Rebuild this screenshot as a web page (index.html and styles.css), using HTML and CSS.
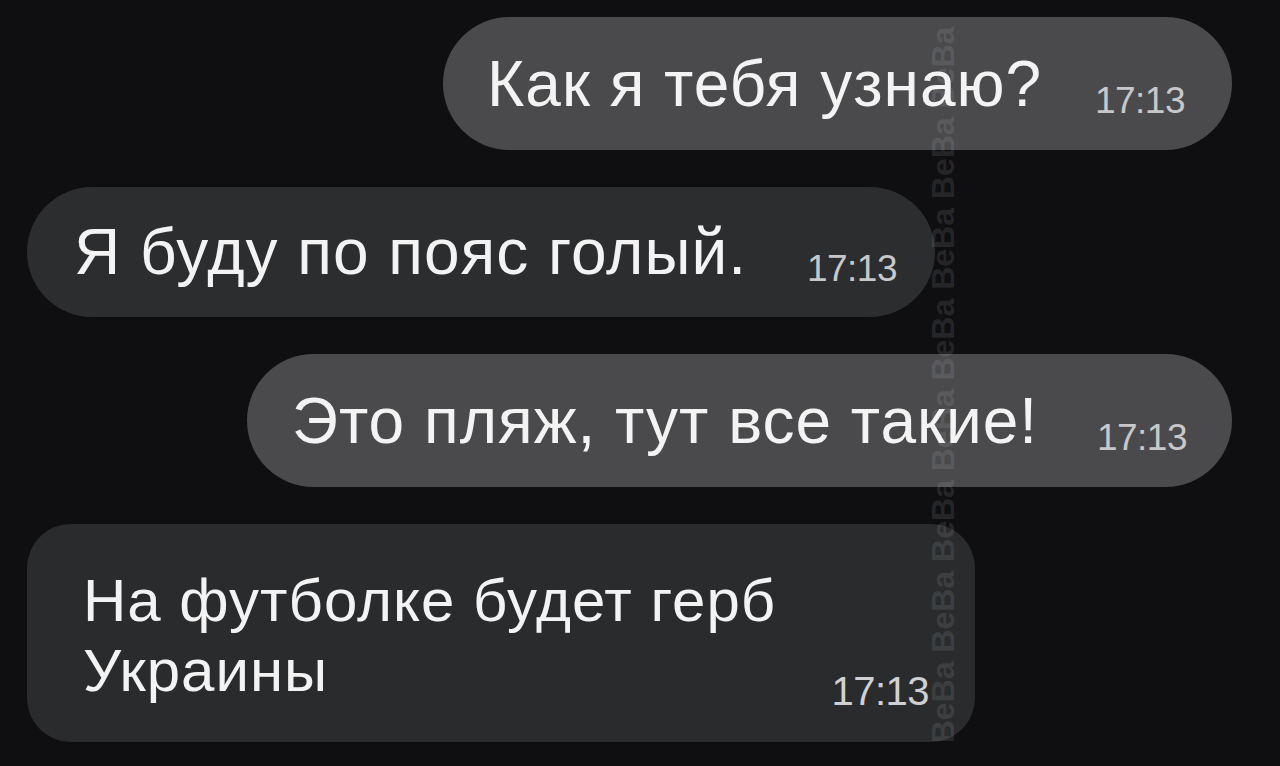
FILE: index.html
```html
<!DOCTYPE html>
<html lang="ru">
<head>
    <meta charset="UTF-8">
    <meta name="viewport" content="width=device-width, initial-scale=1.0">
    <title>Чат</title>
    <link rel="stylesheet" href="styles.css">
</head>
<body>
    <div class="chat">
        <!-- Outgoing -->
        <div class="bubble out first">
            <span class="text">Как я тебя узнаю?</span>
            <span class="time">17:13</span>
        </div>

        <!-- Incoming -->
        <div class="bubble in second">
            <span class="text">Я буду по пояс голый.</span>
            <span class="time">17:13</span>
        </div>

        <div class="bubble out third">
            <span class="text">Это пляж, тут все такие!</span>
            <span class="time">17:13</span>
        </div>

        <div class="bubble in fourth">
            <span class="text">На футболке будет герб<br>Украины</span>
            <span class="time">17:13</span>
        </div>
    </div>

    <div class="watermark">BeBa BeBa BeBa BeBa BeBa BeBa BeBa BeBa</div>
</body>
</html>
```

FILE: styles.css
```css
/* General Styles */
body {
    margin: 0;
    background-color: #0f0f11;
    font-family: "Liberation Sans", Arial, sans-serif;
    height: 766px;
    overflow: hidden;
    position: relative;
}

.chat {
    display: flex;
    flex-direction: column;
    padding: 17px 48px 0 27px;
    gap: 37px;
}

.bubble {
    display: flex;
    align-items: center;
    box-sizing: border-box;
    height: 133px;
    border-radius: 67px;
    color: #f3f3f3;
}

.bubble .text {
    font-size: 64px;
    line-height: 1;
    letter-spacing: 1px;
}

.bubble .time {
    margin-left: auto;
    margin-top: 34px;
    font-size: 37px;
    letter-spacing: -0.5px;
    color: #c8c8ca;
}

.out {
    align-self: flex-end;
    background-color: #4a4a4c;
}

.in {
    align-self: flex-start;
    background-color: #2c2d2f;
}

.first {
    width: 789px;
    padding: 0 47px 0 44px;
}

.second {
    width: 908px;
    height: 130px;
    padding: 0 38px 0 47px;
}

.third {
    width: 985px;
    padding: 0 45px 0 45px;
}

.fourth {
    width: 948px;
    height: 218px;
    border-radius: 44px;
    padding: 0 46px 28px 56px;
    align-items: flex-end;
    background-color: #2a2b2d;
}

.fourth .text {
    font-size: 60px;
    line-height: 70px;
    letter-spacing: 1px;
    margin-bottom: 8px;
}

.fourth .time {
    font-size: 40px;
    color: #d0d0d2;
}

/* Watermark over the chat */
.watermark {
    position: absolute;
    left: 943px;
    top: 385px;
    transform: translate(-50%, -50%) rotate(-90deg);
    white-space: nowrap;
    font-family: "Liberation Sans", Arial, sans-serif;
    font-weight: bold;
    font-size: 32px;
    color: rgba(255, 255, 255, 0.11);
}
```
